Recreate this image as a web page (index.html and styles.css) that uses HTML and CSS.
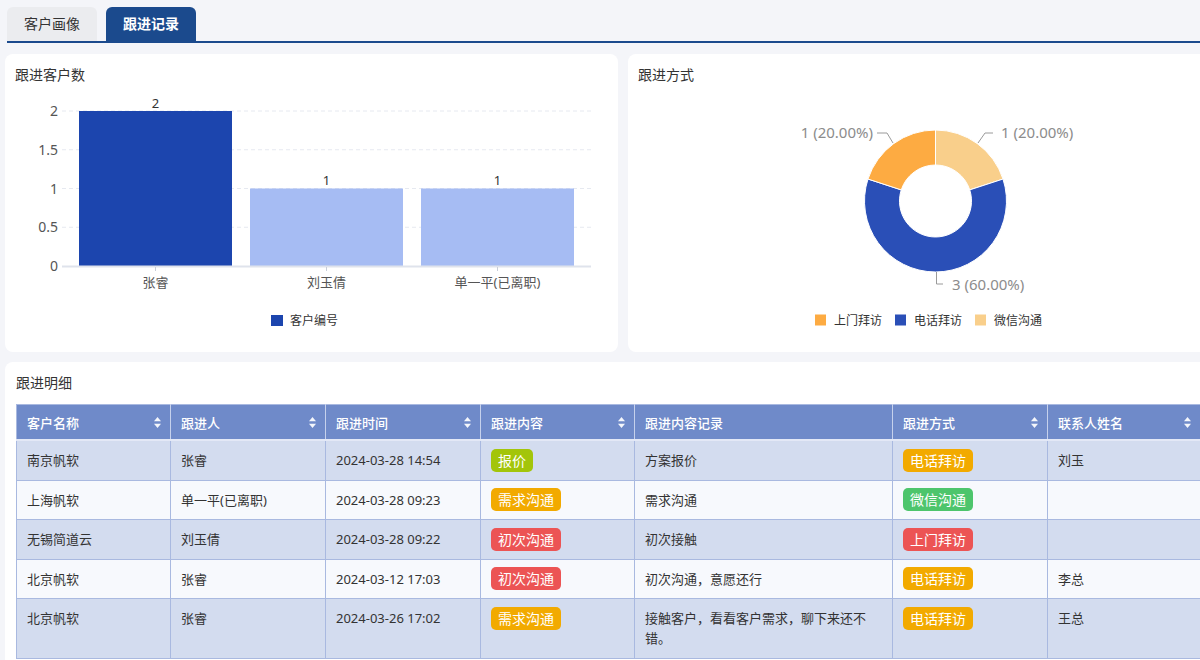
FILE: index.html
```html
<!DOCTYPE html>
<html lang="zh">
<head>
<meta charset="utf-8">
<title>跟进记录</title>
<link rel="stylesheet" href="styles.css">
</head>
<body>
<div class="page">
  <div class="tabs">
    <div class="tab">客户画像</div>
    <div class="tab active">跟进记录</div>
  </div>

  <div class="charts">
    <div class="card">
      <div class="card-title">跟进客户数</div>
      <svg class="chart" width="613" height="267" viewBox="0 0 613 267">
        <g class="grid">
          <line x1="57" y1="26" x2="586" y2="26"/>
          <line x1="57" y1="64.75" x2="586" y2="64.75"/>
          <line x1="57" y1="103.5" x2="586" y2="103.5"/>
          <line x1="57" y1="142.25" x2="586" y2="142.25"/>
        </g>
        <g class="ylabels">
          <text x="53" y="31">2</text>
          <text x="53" y="69.5">1.5</text>
          <text x="53" y="108.5">1</text>
          <text x="53" y="147">0.5</text>
          <text x="53" y="186">0</text>
        </g>
        <rect x="74" y="26" width="153" height="155" fill="#1c45ae"/>
        <rect x="245" y="103.5" width="153" height="77.5" fill="#a6bcf3"/>
        <rect x="416" y="103.5" width="153" height="77.5" fill="#a6bcf3"/>
        <line class="axis" x1="57" y1="181.5" x2="586" y2="181.5"/>
        <g class="ticks">
          <line x1="150.5" y1="182" x2="150.5" y2="186"/>
          <line x1="321.5" y1="182" x2="321.5" y2="186"/>
          <line x1="492.5" y1="182" x2="492.5" y2="186"/>
        </g>
        <g class="vlabels">
          <text x="150.5" y="22.5">2</text>
          <text x="321.5" y="100">1</text>
          <text x="492.5" y="100">1</text>
        </g>
        <g class="xlabels">
          <text x="150.5" y="202">张睿</text>
          <text x="321.5" y="202">刘玉倩</text>
          <text x="492.5" y="202">单一平(已离职)</text>
        </g>
        <rect x="266" y="230" width="12" height="11" fill="#1c45ae"/>
        <text class="legend" x="285" y="240">客户编号</text>
      </svg>
    </div>

    <div class="card">
      <div class="card-title">跟进方式</div>
      <svg class="chart" width="582" height="267" viewBox="0 0 582 267">
        <g stroke="#fff" stroke-width="1">
          <path fill="#f9cf8b" d="M307.5 45 A71 71 0 0 1 375.03 94.06 L341.74 104.88 A36 36 0 0 0 307.5 80 Z"/>
          <path fill="#2a4fb7" d="M375.03 94.06 A71 71 0 1 1 239.97 94.06 L273.26 104.88 A36 36 0 1 0 341.74 104.88 Z"/>
          <path fill="#fdab42" d="M239.97 94.06 A71 71 0 0 1 307.5 45 L307.5 80 A36 36 0 0 0 273.26 104.88 Z"/>
        </g>
        <g class="leader">
          <polyline points="249,48 259,48 265,58"/>
          <polyline points="350,58 357,48 365,48"/>
          <polyline points="308.5,187 308.5,199 315,199"/>
        </g>
        <g class="plabels">
          <text x="245" y="52.5" text-anchor="end">1 (20.00%)</text>
          <text x="373" y="52.5">1 (20.00%)</text>
          <text x="324" y="204.5">3 (60.00%)</text>
        </g>
        <rect x="187" y="229.5" width="11" height="11" fill="#fdab42"/>
        <text class="legend" x="206" y="240">上门拜访</text>
        <rect x="267" y="229.5" width="11" height="11" fill="#2a4fb7"/>
        <text class="legend" x="286" y="240">电话拜访</text>
        <rect x="347" y="229.5" width="11" height="11" fill="#f9cf8b"/>
        <text class="legend" x="366" y="240">微信沟通</text>
      </svg>
    </div>
  </div>

  <div class="card detail">
    <div class="card-title">跟进明细</div>
    <table class="tbl">
      <colgroup>
        <col style="width:154px"><col style="width:155px"><col style="width:155px"><col style="width:154px"><col style="width:258px"><col style="width:155px"><col style="width:153px">
      </colgroup>
      <thead>
        <tr>
          <th><div class="th-in"><span>客户名称</span><svg class="sort" width="7" height="11" viewBox="0 0 7 11"><polygon points="3.5,0 7,4.2 0,4.2"/><polygon points="0,6.8 7,6.8 3.5,11"/></svg></div></th>
          <th><div class="th-in"><span>跟进人</span><svg class="sort" width="7" height="11" viewBox="0 0 7 11"><polygon points="3.5,0 7,4.2 0,4.2"/><polygon points="0,6.8 7,6.8 3.5,11"/></svg></div></th>
          <th><div class="th-in"><span>跟进时间</span><svg class="sort" width="7" height="11" viewBox="0 0 7 11"><polygon points="3.5,0 7,4.2 0,4.2"/><polygon points="0,6.8 7,6.8 3.5,11"/></svg></div></th>
          <th><div class="th-in"><span>跟进内容</span><svg class="sort" width="7" height="11" viewBox="0 0 7 11"><polygon points="3.5,0 7,4.2 0,4.2"/><polygon points="0,6.8 7,6.8 3.5,11"/></svg></div></th>
          <th><div class="th-in"><span>跟进内容记录</span></div></th>
          <th><div class="th-in"><span>跟进方式</span><svg class="sort" width="7" height="11" viewBox="0 0 7 11"><polygon points="3.5,0 7,4.2 0,4.2"/><polygon points="0,6.8 7,6.8 3.5,11"/></svg></div></th>
          <th><div class="th-in"><span>联系人姓名</span><svg class="sort" width="7" height="11" viewBox="0 0 7 11"><polygon points="3.5,0 7,4.2 0,4.2"/><polygon points="0,6.8 7,6.8 3.5,11"/></svg></div></th>
        </tr>
      </thead>
      <tbody>
        <tr class="odd">
          <td>南京帆软</td><td>张睿</td><td>2024-03-28 14:54</td>
          <td><span class="tag lime">报价</span></td>
          <td>方案报价</td>
          <td><span class="tag amber">电话拜访</span></td>
          <td>刘玉</td>
        </tr>
        <tr class="even">
          <td>上海帆软</td><td>单一平(已离职)</td><td>2024-03-28 09:23</td>
          <td><span class="tag amber">需求沟通</span></td>
          <td>需求沟通</td>
          <td><span class="tag green">微信沟通</span></td>
          <td></td>
        </tr>
        <tr class="odd">
          <td>无锡简道云</td><td>刘玉倩</td><td>2024-03-28 09:22</td>
          <td><span class="tag red">初次沟通</span></td>
          <td>初次接触</td>
          <td><span class="tag red">上门拜访</span></td>
          <td></td>
        </tr>
        <tr class="even">
          <td>北京帆软</td><td>张睿</td><td>2024-03-12 17:03</td>
          <td><span class="tag red">初次沟通</span></td>
          <td>初次沟通，意愿还行</td>
          <td><span class="tag amber">电话拜访</span></td>
          <td>李总</td>
        </tr>
        <tr class="odd">
          <td>北京帆软</td><td>张睿</td><td>2024-03-26 17:02</td>
          <td><span class="tag amber">需求沟通</span></td>
          <td>接触客户，看看客户需求，聊下来还不错。</td>
          <td><span class="tag amber">电话拜访</span></td>
          <td>王总</td>
        </tr>
      </tbody>
    </table>
  </div>
</div>
</body>
</html>
```

FILE: styles.css
```css
html, body {
  margin: 0;
  padding: 0;
  background: #f4f5f9;
  overflow: hidden;
}
body {
  font-family: "Noto Sans", "Noto Sans CJK SC", sans-serif;
  color: #333;
  width: 1200px;
  height: 660px;
}
.page {
  width: 1210px;
  padding-left: 5px;
  box-sizing: border-box;
}
.tabs {
  display: flex;
  gap: 9px;
  margin-left: 2px;
  padding-top: 7px;
  border-bottom: 2px solid #1b4a8d;
}
.tab {
  height: 34px;
  width: 90px;
  box-sizing: border-box;
  border-radius: 6px 6px 0 0;
  background: #ebecef;
  color: #333;
  font-size: 14px;
  line-height: 34px;
  text-align: center;
}
.tab.active {
  background: #1b4a8d;
  color: #fff;
  font-weight: 700;
}
.charts {
  display: grid;
  grid-template-columns: 613px 1fr;
  gap: 10px;
  margin-top: 11px;
}
.card {
  background: #fff;
  border-radius: 8px;
  height: 298px;
  overflow: hidden;
}
.card-title {
  font-size: 14px;
  line-height: 20px;
  padding: 11px 11px 0 10px;
  color: #333;
}
.chart {
  display: block;
  font-family: "Noto Sans", "Noto Sans CJK SC", sans-serif;
}
.grid line {
  stroke: #e6e9f0;
  stroke-width: 1;
  stroke-dasharray: 4 3;
}
.axis {
  stroke: #dfe3ec;
  stroke-width: 2;
}
.ticks line {
  stroke: #c9ced9;
  stroke-width: 1;
}
.ylabels text {
  font-size: 14px;
  fill: #555;
  text-anchor: end;
}
.vlabels text {
  font-size: 13px;
  fill: #333;
  text-anchor: middle;
}
.xlabels text {
  font-size: 13px;
  fill: #555;
  text-anchor: middle;
}
.legend {
  font-size: 12px;
  fill: #333;
}
.leader polyline {
  fill: none;
  stroke: #9a9a9a;
  stroke-width: 1;
}
.plabels text {
  font-size: 15px;
  fill: #8c8c8c;
}
.detail {
  margin-top: 10px;
  height: 320px;
  padding: 0 10px 0 11px;
}
.detail .card-title {
  padding: 11px 0 0;
}
.tbl {
  margin-top: 11px;
  width: 1184px;
  table-layout: fixed;
  border-collapse: collapse;
  font-size: 13px;
}
.tbl th {
  background: #6f8ac9;
  color: #fff;
  font-weight: 500;
  height: 34px;
  padding: 0 9px 0 10px;
  text-align: left;
  border-top: 1px solid #a9b9e0;
  border-right: 1px solid #c6d1ec;
  border-bottom: 2px solid #e3e8f6;
  border-left: 1px solid #a9b9e0;
}
.th-in {
  display: flex;
  align-items: center;
  justify-content: space-between;
}
.sort polygon {
  fill: #fff;
  opacity: 0.92;
}
.tbl td {
  border: 1px solid #a9b9e0;
  padding: 9px 10px 9.5px;
  line-height: 20px;
  vertical-align: top;
  color: #333;
}
.odd td {
  background: #d3dcef;
}
.even td {
  background: #f7f9fd;
}
.tag {
  display: inline-block;
  vertical-align: top;
  font-size: 14px;
  line-height: 23px;
  height: 23px;
  margin: -1.5px 0;
  padding: 0 7px;
  border-radius: 5px;
  color: #fff;
}
.lime { background: #a3c50a; }
.amber { background: #f2aa00; }
.red { background: #ec5454; }
.green { background: #4dc56c; }
```
